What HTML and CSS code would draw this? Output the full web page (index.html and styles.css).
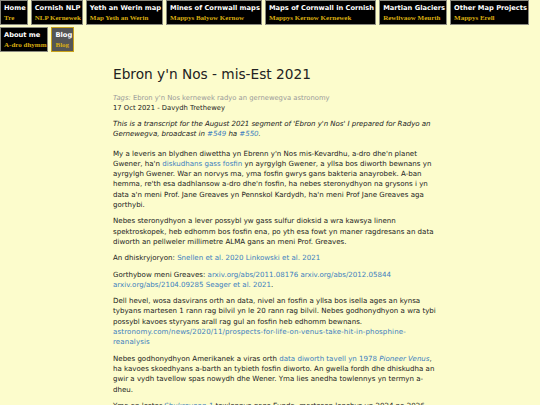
FILE: index.html
```html
<!DOCTYPE html>
<html>
<head>
<meta charset="utf-8">
<link rel="stylesheet" href="styles.css">
</head>
<body>
<nav class="nav">
  <a class="tile" href="#"><span class="t">Home</span><span class="s">Tre</span></a>
  <a class="tile" href="#"><span class="t">Cornish NLP</span><span class="s">NLP Kernewek</span></a>
  <a class="tile" href="#"><span class="t">Yeth an Werin map</span><span class="s">Map Yeth an Werin</span></a>
  <a class="tile" href="#"><span class="t">Mines of Cornwall maps</span><span class="s">Mappys Balyow Kernow</span></a>
  <a class="tile" href="#"><span class="t">Maps of Cornwall in Cornish</span><span class="s">Mappys Kernow Kernewek</span></a>
  <a class="tile" href="#"><span class="t">Martian Glaciers</span><span class="s">Rewlivaow Meurth</span></a>
  <a class="tile" href="#"><span class="t">Other Map Projects</span><span class="s">Mappys Erell</span></a>
  <a class="tile" href="#"><span class="t">About me</span><span class="s">A-dro dhymm</span></a>
  <a class="tile active" href="#"><span class="t">Blog</span><span class="s">Blog</span></a>
</nav>
<main class="post">
  <h1 class="title">Ebron y'n Nos - mis-Est 2021</h1>
  <div class="tags"><em>Tags:</em> Ebron y'n Nos kernewek radyo an gernewegva astronomy</div>
  <div class="date">17 Oct 2021 - Davydh Trethewey</div>
  <p class="intro">This is a transcript for the August 2021 segment of 'Ebron y'n Nos' I prepared for Radyo an Gernewegva, broadcast in <a href="#">#549</a> ha <a href="#">#550</a>.</p>
  <p>My a leveris an blydhen diwettha yn Ebrenn y'n Nos mis-Kevardhu, a-dro dhe'n planet Gwener, ha'n <a href="#">diskudhans gass fosfin</a> yn ayrgylgh Gwener, a yllsa bos diworth bewnans yn ayrgylgh Gwener. War an norvys ma, yma fosfin gwrys gans bakteria anayrobek. A-ban hemma, re'th esa dadhlansow a-dro dhe'n fosfin, ha nebes steronydhyon na grysons i yn data a'n meni Prof. Jane Greaves yn Pennskol Kardydh, ha'n meni Prof Jane Greaves aga gorthybi.</p>
  <p>Nebes steronydhyon a lever possybl yw gass sulfur dioksid a wra kawsya linenn spektroskopek, heb edhomm bos fosfin ena, po yth esa fowt yn maner ragdresans an data diworth an pellweler millimetre ALMA gans an meni Prof. Greaves.</p>
  <p>An dhiskryjoryon: <a href="#">Snellen et al. 2020</a> <a href="#">Linkowski et al. 2021</a></p>
  <p>Gorthybow meni Greaves: <a href="#">arxiv.org/abs/2011.08176</a> <a href="#">arxiv.org/abs/2012.05844</a> <a href="#">arxiv.org/abs/2104.09285</a> <a href="#">Seager et al. 2021</a>.</p>
  <p>Dell hevel, wosa dasvirans orth an data, nivel an fosfin a yllsa bos isella ages an kynsa tybyans martesen 1 rann rag bilvil yn le 20 rann rag bilvil. Nebes godhonydhyon a wra tybi possybl kavoes styryans arall rag gul an fosfin heb edhomm bewnans. <a class="url" href="#">astronomy.com/news/2020/11/prospects-for-life-on-venus-take-hit-in-phosphine-reanalysis</a></p>
  <p>Nebes godhonydhyon Amerikanek a viras orth <a href="#">data diworth tavell yn 1978 <em>Pioneer Venus</em></a>, ha kavoes skoedhyans a-barth an tybieth fosfin diworto. An gwella fordh dhe dhiskudha an gwir a vydh tavellow spas nowydh dhe Wener. Yma lies anedha towlennys yn termyn a-dheu.</p>
  <p>Yma an lester <a href="#"><em>Shukrayaan-1</em></a> towlennys gans Eynda, martesen lonchys yn 2024 po 2026.</p>
</main>
</body>
</html>
```
FILE: styles.css
```css
html, body {
  margin: 0;
  padding: 0;
  background: #fcfccc;
}
body {
  font-family: "DejaVu Sans", Verdana, sans-serif;
  color: #222;
}
.nav {
  display: flex;
  flex-wrap: wrap;
  gap: 2px 3px;
}
.tile {
  display: flex;
  flex-direction: column;
  background: #000;
  border: 1px solid #8a8a80;
  padding: 2px 1px 2px 3px;
  height: 19px;
  text-decoration: none;
  white-space: nowrap;
}
.tile .t {
  color: #fff;
  font-weight: bold;
  font-size: 6.7px;
  line-height: 10px;
}
.tile .s {
  color: #d9ad10;
  font-family: "Liberation Serif", "Times New Roman", serif;
  font-weight: bold;
  font-size: 7px;
  line-height: 10px;
}
.tile.active {
  background: #555;
  border-color: #c9a21a;
}
.post {
  width: 324px;
  margin: 0 0 0 113px;
  padding-top: 13px;
  font-size: 7.07px;
  line-height: 10.3px;
}
.title {
  font-weight: normal;
  font-size: 13.7px;
  line-height: 18px;
  margin: 0 0 10px 0;
}
.tags {
  color: #999;
  font-size: 6.8px;
  line-height: 10px;
}
.date {
  font-size: 6.8px;
  line-height: 10px;
}
.post p {
  margin: 6px 0 0 0;
}
.post p.intro {
  font-style: italic;
  letter-spacing: -0.05px;
  margin: 6px 0 9px 0;
}
a {
  color: #3d7fbf;
  text-decoration: none;
}
a.url {
  letter-spacing: 0.12px;
}
```
